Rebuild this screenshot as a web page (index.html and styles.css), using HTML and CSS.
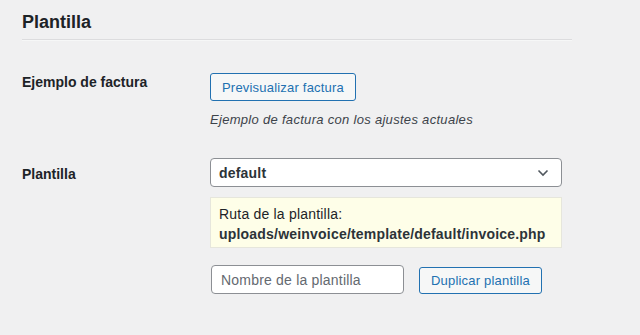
FILE: index.html
```html
<!DOCTYPE html>
<html lang="es">
<head>
    <meta charset="UTF-8">
    <title>Plantilla</title>
    <link rel="stylesheet" href="styles.css">
</head>
<body>

    <div class="wrap">
        <h2>Plantilla</h2>
        <hr class="divider">

        <!-- Vista previa -->
        <div class="form-row">
            <div class="label">Ejemplo de factura</div>
            <div class="field">
                <button class="button" type="button">Previsualizar factura</button>
                <p class="description">Ejemplo de factura con los ajustes actuales</p>
            </div>
        </div>

        <!-- Selector de plantilla -->
        <div class="form-row">
            <div class="label">Plantilla</div>
            <div class="field">
                <div class="select">
                    <span>default</span>
                    <svg class="chevron" width="12" height="8" viewBox="0 0 12 8">
                        <path d="M1.5 1.5 L6 6 L10.5 1.5" fill="none" stroke="#50575e" stroke-width="1.6"/>
                    </svg>
                </div>
                <div class="notice">
                    Ruta de la plantilla:<br>
                    <strong>uploads/weinvoice/template/default/invoice.php</strong>
                </div>
                <div class="duplicate">
                    <input class="text-input" type="text" placeholder="Nombre de la plantilla">
                    <button class="button" type="button">Duplicar plantilla</button>
                </div>
            </div>
        </div>
    </div>

</body>
</html>
```

FILE: styles.css
```css
body {
    font-family: "Liberation Sans", Arial, sans-serif;
    margin: 0;
    padding: 0;
    background-color: #f0f0f1;
    color: #1d2327;
    font-size: 14px;
}
.wrap {
    padding: 0 68px 0 22px;
}
h2 {
    margin: 0;
    padding-top: 11px;
    font-size: 18px;
    font-weight: 700;
    line-height: 23px;
    color: #1d2327;
}
.divider {
    margin: 5px 0 0 0;
    border: none;
    border-top: 1px solid #dcdcde;
    border-bottom: 1px solid #f6f7f7;
    height: 0;
}
.form-row {
    display: grid;
    grid-template-columns: 188px 1fr;
}
.form-row:first-of-type {
    padding-top: 32px;
}
.label {
    font-weight: 700;
    font-size: 14px;
    padding-top: 1px;
}
.form-row + .form-row {
    padding-top: 31px;
}
.form-row + .form-row .label {
    padding-top: 8px;
}
.button {
    font-family: inherit;
    font-size: 13px;
    letter-spacing: 0.2px;
    color: #2271b1;
    background-color: #f6f7f7;
    border: 1px solid #2271b1;
    border-radius: 3px;
    height: 28px;
    padding: 0 11px;
    cursor: pointer;
}
.description {
    margin: 11px 0 0 0;
    font-style: italic;
    font-size: 13px;
    letter-spacing: 0.3px;
    color: #3c434a;
}
.select {
    display: flex;
    justify-content: space-between;
    align-items: center;
    width: 352px;
    height: 29px;
    box-sizing: border-box;
    padding: 0 12px 0 8px;
    background-color: #fff;
    border: 1px solid #8c8f94;
    border-radius: 4px;
    font-weight: 700;
    font-size: 14px;
    letter-spacing: 0.2px;
    color: #2c3338;
}
.notice {
    margin-top: 10px;
    width: 352px;
    box-sizing: border-box;
    background-color: #fefee8;
    border: 1px solid #e6e6dc;
    padding: 6px 8px 3px 8px;
    line-height: 20px;
    font-size: 14px;
    letter-spacing: 0.2px;
    color: #1d2327;
}
.notice strong {
    color: #2c3338;
}
.duplicate {
    display: flex;
    align-items: flex-start;
    gap: 15px;
    margin-top: 17px;
    padding-left: 1px;
}
.text-input {
    width: 193px;
    height: 29px;
    box-sizing: border-box;
    padding: 0 9px;
    border: 1px solid #8c8f94;
    border-radius: 4px;
    font-family: inherit;
    font-size: 14px;
    letter-spacing: 0.2px;
    background-color: #fff;
}
.text-input::placeholder {
    color: #646970;
}
.duplicate .button {
    height: 27px;
    margin-top: 2px;
}
```
